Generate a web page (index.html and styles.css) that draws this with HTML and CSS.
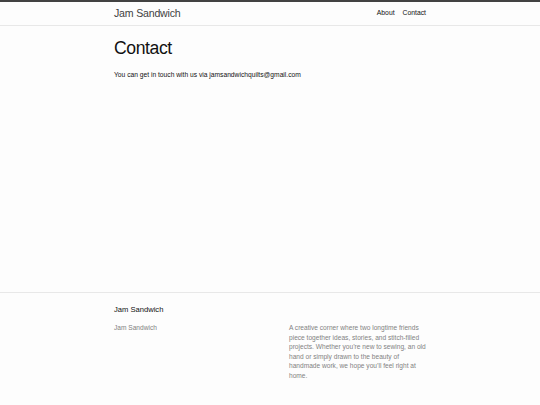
FILE: index.html
```html
<!DOCTYPE html>
<html lang="en">
<head>
    <meta charset="UTF-8">
    <meta name="viewport" content="width=device-width, initial-scale=1.0">
    <title>Contact | Jam Sandwich</title>
    <link rel="stylesheet" href="styles.css">
</head>
<body>
    <header class="site-header">
        <div class="wrapper header-row">
            <a class="site-title" href="#">Jam Sandwich</a>
            <nav class="site-nav">
                <a class="page-link" href="#">About</a>
                <a class="page-link" href="#">Contact</a>
            </nav>
        </div>
    </header>

    <main class="page-content">
        <div class="wrapper">
            <h1 class="post-title">Contact</h1>
            <p>You can get in touch with us via jamsandwichquilts@gmail.com</p>
        </div>
    </main>

    <footer class="site-footer">
        <div class="wrapper">
            <h2 class="footer-heading">Jam Sandwich</h2>
            <div class="footer-cols">
                <p class="footer-col">Jam Sandwich</p>
                <p class="footer-col">A creative corner where two longtime friends piece together ideas, stories, and stitch-filled projects. Whether you’re new to sewing, an old hand or simply drawn to the beauty of handmade work, we hope you’ll feel right at home.</p>
            </div>
        </div>
    </footer>
</body>
</html>
```

FILE: styles.css
```css
* {
    box-sizing: border-box;
}
html, body {
    height: 100%;
}
body {
    margin: 0;
    display: flex;
    flex-direction: column;
    background-color: #fdfdfd;
    color: #111;
    font-family: "Liberation Sans", Arial, Helvetica, sans-serif;
    font-size: 6.7px;
    line-height: 1.5;
}
a {
    text-decoration: none;
}
.wrapper {
    width: 312px;
    margin: 0 auto;
}

/* header */
.site-header {
    border-top: 2px solid #424242;
    border-bottom: 1px solid #e8e8e8;
}
.header-row {
    display: flex;
    justify-content: space-between;
    align-items: center;
    height: 23px;
}
.site-title {
    color: #424242;
    font-size: 10.6px;
    font-weight: 300;
    letter-spacing: -0.2px;
}
.site-nav {
    display: flex;
    gap: 8px;
}
.page-link {
    color: #111;
    font-size: 6.8px;
}

/* main */
.page-content {
    flex: 1;
    padding-top: 13px;
}
.post-title {
    margin: 0 0 13px;
    font-size: 17.6px;
    font-weight: 400;
    line-height: 18px;
    letter-spacing: -0.4px;
}
.page-content p {
    margin: 0;
}

/* footer */
.site-footer {
    border-top: 1px solid #e8e8e8;
    padding: 12px 0 25px;
}
.footer-heading {
    margin: 0 0 8px;
    font-size: 7.6px;
    font-weight: 400;
    line-height: 10px;
}
.footer-cols {
    display: grid;
    grid-template-columns: 175px 1fr;
}
.footer-col {
    margin: 0;
    color: #828282;
    font-size: 6.6px;
    line-height: 9.5px;
}
```
